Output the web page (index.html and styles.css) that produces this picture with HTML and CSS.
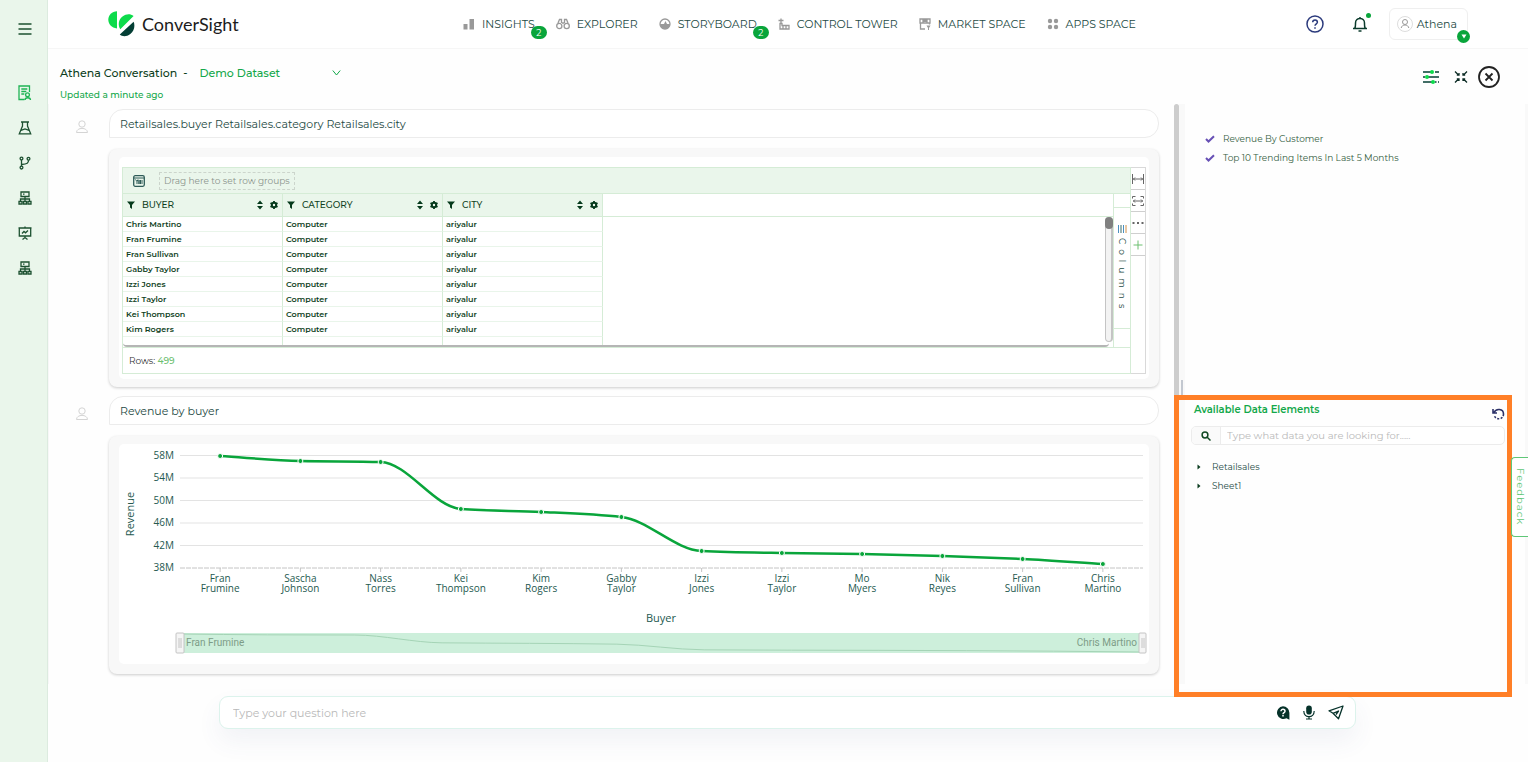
FILE: index.html
```html
<!DOCTYPE html>
<html lang="en">
<head>
  <meta charset="UTF-8" />
  <meta name="viewport" content="width=device-width, initial-scale=1.0"/>
  <title>ConverSight - Athena</title>
  <link rel="stylesheet" href="styles.css">
</head>
<body>

  <!-- Sidebar -->
  <aside class="sidebar">
    <button class="side-btn menu" aria-label="Menu"><svg width="14" height="14" viewBox="0 0 14 14"><path d="M0.5 2h13M0.5 7h13M0.5 12h13"/></svg></button>
    <a href="#" class="side-btn active" aria-label="Conversations"><svg width="14" height="16" viewBox="0 0 14 16"><path d="M6.500 14.500H1V1h10.500v6M3.300 4h6M3.300 6.500h5M3.300 9h3"/><circle cx="9.500" cy="9.800" r="1.900"/><path d="M7 15c0-3 5.500-3 5.500 0"/></svg></a>
    <a href="#" class="side-btn" aria-label="Lab"><svg width="14" height="14" viewBox="0 0 14 14"><path d="M3 1h8M4.500 1v4L1.300 12.800h11.400L9.500 5V1M3 9.300l4-1.300 4 1.300"/></svg></a>
    <a href="#" class="side-btn" aria-label="Branches"><svg width="14" height="14" viewBox="0 0 14 14"><circle cx="3.500" cy="2.500" r="1.400"/><circle cx="3.500" cy="11.600" r="1.400"/><circle cx="10.500" cy="2.800" r="1.400"/><path d="M3.500 4v6.200M10.500 4.200c0 3-1 3.800-7 4.300"/></svg></a>
    <a href="#" class="side-btn" aria-label="Flows"><svg width="14" height="14" viewBox="0 0 14 14"><path d="M3 1h8v4.500H3zM5 3.200h1.500M7 5.500v5M2.500 10V8h9v2M1 10.500h3v2.500H1zM5.500 10.500h3v2.500h-3zM10 10.500h3v2.500h-3z"/></svg></a>
    <a href="#" class="side-btn" aria-label="Presentations"><svg width="14" height="14" viewBox="0 0 14 14"><path d="M0.500 2h13M1.300 2v8h11.400V2M7 0.500V2M7 10v2.500M4.500 13.500L7 11.500l2.500 2M4 7.500l2-2 1.500 1.300L10 4.500"/></svg></a>
    <a href="#" class="side-btn" aria-label="Models"><svg width="14" height="14" viewBox="0 0 14 14"><path d="M3 1h8v4.500H3zM5 3.200h1.500M7 5.500v5M2.500 10V8h9v2M1 10.500h3v2.500H1zM5.500 10.500h3v2.500h-3zM10 10.500h3v2.500h-3z"/></svg></a>
  </aside>

  <div class="page">

    <!-- Top navigation -->
    <header class="topbar">
      <a href="#" class="logo">
        <svg width="27" height="27" viewBox="0 0 27 27">
          <path fill="#0ddb4b" d="M9 0.200V17.500C3.500 17 0.300 13 0.300 8.800 0.300 4 4 0.500 9 0.200z"/>
          <path fill="#0ddb4b" d="M25.600 5L12.300 18.300C9.800 14.500 10.300 8.500 14.500 5.500 18.500 2.500 22.500 2.800 25.600 5z"/>
          <path fill="#043f35" d="M25.600 10.800C27.300 14.500 26.300 20 22.300 23 18.500 26 14 25.600 11.800 23.500z"/>
        </svg>
        <span>ConverSight</span>
      </a>
      <nav class="nav">
        <a href="#"><svg width="12" height="12" viewBox="0 0 12 12"><path d="M0.500 6h4v5.500h-4zM6.500 1h4.500v10.500H6.500z"/></svg>INSIGHTS<span class="badge">2</span></a>
        <a href="#"><svg width="14" height="12" viewBox="0 0 14 12"><path class="ln" d="M2 5l1.500-3.500h2V5M12 5l-1.500-3.500h-2V5M6 5h2"/><circle class="ln" cx="3.300" cy="8" r="2.600"/><circle class="ln" cx="10.700" cy="8" r="2.600"/></svg>EXPLORER</a>
        <a href="#"><svg width="12" height="12" viewBox="0 0 12 12"><circle class="ln" cx="6" cy="6" r="5"/><path d="M1 6h4l1.500-3L8 6h3a5 5 0 0 1-10 0z"/></svg>STORYBOARD<span class="badge">2</span></a>
        <a href="#"><svg width="12" height="12" viewBox="0 0 12 12"><path class="ln" d="M0.500 2.500h5M3 0.500v5M2 5.500h2v2h7v3.500H2zM5 7.500V11M8 7.500V11"/></svg>CONTROL TOWER</a>
        <a href="#"><svg width="12" height="12" viewBox="0 0 12 12"><path class="ln" d="M1 1h10v4H1zM1.500 5v6H6M10.500 5v1.500M4 1v4M8 1v4"/><path d="M4 1h4v3H4zM7.500 7.500h4L10 10v2H9v-2z"/></svg>MARKET SPACE</a>
        <a href="#"><svg width="12" height="12" viewBox="0 0 12 12"><circle cx="3" cy="3" r="2.200"/><circle cx="9" cy="3" r="2.200"/><circle cx="3" cy="9" r="2.200"/><circle cx="9" cy="9" r="2.200"/></svg>APPS SPACE</a>
      </nav>
      <div class="account">
        <button class="icon-btn" aria-label="Help"><svg width="18" height="18" viewBox="0 0 18 18" fill="none" stroke="#2b3a7c" stroke-width="1.500"><circle cx="9" cy="9" r="8"/><path d="M6.700 7.200c0-3 4.700-3 4.700 0C11.400 8.800 9 8.800 9 10.800M9 12.300v1.500"/></svg></button>
        <button class="icon-btn bell" aria-label="Notifications"><svg width="16" height="18" viewBox="0 0 16 18" fill="none" stroke="#0b3b2c" stroke-width="1.500"><path d="M1 13.500h14M2.700 13.500c1-1.500.8-3 .8-5.500 0-6 9-6 9 0 0 2.500-.2 4 .8 5.500M8 3.500V2M6.500 16h3"/></svg><i></i></button>
        <button class="user">
          <svg width="16" height="16" viewBox="0 0 16 16" fill="none" stroke="#999"><circle cx="8" cy="8" r="7.500" stroke="#ddd"/><circle cx="8" cy="6" r="2.500"/><path d="M4.200 12c.6-4 7-4 7.600 0"/></svg>
          Athena
          <span class="caret"><svg width="6" height="5" viewBox="0 0 6 5"><path fill="#fff" d="M0.500 0.500h5L3 4.500z"/></svg></span>
        </button>
      </div>
    </header>

    <!-- Conversation title -->
    <section class="titlebar">
      <div>
        <div class="title-row">
          <h1>Athena Conversation</h1>
          <span>-</span>
          <button class="dataset">Demo Dataset <svg width="9" height="6" viewBox="0 0 9 6"><path fill="none" stroke="#13a84a" d="M0.800 0.500l3.700 4.500L8.200 0.500"/></svg></button>
        </div>
        <p class="updated">Updated a minute ago</p>
      </div>
      <div class="tools">
        <button class="icon-btn" aria-label="Settings"><svg width="18" height="14" viewBox="0 0 18 14"><path stroke="#043f35" stroke-width="1.500" d="M1 2h10M13 2h4M1 7h2M6 7h11M1 12h10M13 12h1.500M16 12h1"/><g fill="#0ddb4b"><circle cx="10" cy="2" r="2"/><circle cx="5" cy="7" r="2"/><circle cx="11" cy="12" r="2"/></g></svg></button>
        <button class="icon-btn" aria-label="Collapse"><svg width="14" height="14" viewBox="0 0 14 14" fill="none" stroke="#0b2b24" stroke-width="1.300"><path d="M1 1.500l3.500 3.500M2.800 5.200h2.200V3M13 1.500L9.500 5M11.200 5.200H9V3M1 12.500L4.500 9M2.800 8.800h2.200V11M13 12.500L9.500 9M11.200 8.800H9V11"/></svg></button>
        <button class="icon-btn" aria-label="Close"><svg width="24" height="24" viewBox="0 0 24 24" fill="none" stroke="#222" stroke-width="1.800"><circle cx="12" cy="12" r="10"/><path d="M8.500 8.500l7 7M15.500 8.500l-7 7"/></svg></button>
      </div>
    </section>

    <div class="workspace">

      <!-- Chat -->
      <main class="chat">
        <div class="question">
          <svg class="avatar" width="12" height="14" viewBox="0 0 12 14"><circle cx="6" cy="4" r="3.200"/><path d="M0.500 12.500c0-5.500 11-5.500 11 0z"/></svg>
          <p>Retailsales.buyer Retailsales.category Retailsales.city</p>
        </div>

        <div class="card">
          <div class="card-body table-body">
            <div class="grid">
              <div class="grid-main">
                <div class="group-bar">
                  <svg width="12" height="12" viewBox="0 0 12 12"><rect x="0.700" y="0.700" width="10.600" height="10.600" rx="1.500" fill="none" stroke="#2f5c58" stroke-width="1.300"/><path stroke="#2f5c58" fill="none" d="M1 3h10M2.500 4.500L4 6.500l1-2M4 6.500V9M6 9V5v4M7.500 9V5M9 9V5"/></svg>
                  <span>Drag here to set row groups</span>
                </div>
                <div class="grid-center">
                  <div class="grid-data">
                    <div class="grid-head-fill"></div>
                    <div class="grid-scroll">
                      <table>
                        <thead>
                          <tr>
                            <th><div><svg class="filter" width="8" height="8" viewBox="0 0 8 8"><path d="M0 0.500h8L5 4v4L3 6.500V4z"/></svg>BUYER<svg class="sort" width="6" height="10" viewBox="0 0 6 10"><path d="M0 4l3-3.500L6 4zM0 6l3 3.500L6 6z"/></svg><svg width="8" height="8" viewBox="0 0 8 8"><circle cx="4" cy="4" r="2.200" fill="none" stroke="#063a1c" stroke-width="2"/><path stroke="#063a1c" stroke-width="1.800" d="M4 0v1.500M4 6.500V8M0.500 2l1.300.8M6.200 5.200l1.300.8M0.500 6l1.300-.8M6.200 2.800L7.500 2"/></svg></div></th>
                            <th><div><svg class="filter" width="8" height="8" viewBox="0 0 8 8"><path d="M0 0.500h8L5 4v4L3 6.500V4z"/></svg>CATEGORY<svg class="sort" width="6" height="10" viewBox="0 0 6 10"><path d="M0 4l3-3.500L6 4zM0 6l3 3.500L6 6z"/></svg><svg width="8" height="8" viewBox="0 0 8 8"><circle cx="4" cy="4" r="2.200" fill="none" stroke="#063a1c" stroke-width="2"/><path stroke="#063a1c" stroke-width="1.800" d="M4 0v1.500M4 6.500V8M0.500 2l1.300.8M6.200 5.200l1.300.8M0.500 6l1.300-.8M6.200 2.800L7.500 2"/></svg></div></th>
                            <th><div><svg class="filter" width="8" height="8" viewBox="0 0 8 8"><path d="M0 0.500h8L5 4v4L3 6.500V4z"/></svg>CITY<svg class="sort" width="6" height="10" viewBox="0 0 6 10"><path d="M0 4l3-3.500L6 4zM0 6l3 3.500L6 6z"/></svg><svg width="8" height="8" viewBox="0 0 8 8"><circle cx="4" cy="4" r="2.200" fill="none" stroke="#063a1c" stroke-width="2"/><path stroke="#063a1c" stroke-width="1.800" d="M4 0v1.500M4 6.500V8M0.500 2l1.300.8M6.200 5.200l1.300.8M0.500 6l1.300-.8M6.200 2.800L7.500 2"/></svg></div></th>
                          </tr>
                        </thead>
                        <tbody>
                          <tr><td>Chris Martino</td><td>Computer</td><td>ariyalur</td></tr>
                          <tr><td>Fran Frumine</td><td>Computer</td><td>ariyalur</td></tr>
                          <tr><td>Fran Sullivan</td><td>Computer</td><td>ariyalur</td></tr>
                          <tr><td>Gabby Taylor</td><td>Computer</td><td>ariyalur</td></tr>
                          <tr><td>Izzi Jones</td><td>Computer</td><td>ariyalur</td></tr>
                          <tr><td>Izzi Taylor</td><td>Computer</td><td>ariyalur</td></tr>
                          <tr><td>Kei Thompson</td><td>Computer</td><td>ariyalur</td></tr>
                          <tr><td>Kim Rogers</td><td>Computer</td><td>ariyalur</td></tr>
                          <tr class="spacer"><td></td><td></td><td></td></tr>
                        </tbody>
                      </table>
                    </div>
                    <div class="scrollbar"><i></i></div>
                  </div>
                  <div class="columns-tab">
                    <button><svg width="9" height="8" viewBox="0 0 9 8"><path stroke="#4a90c0" d="M0.500 0v8M5.500 0v8"/><path stroke="#3c6c68" d="M3 0v8"/><path stroke="#d0904a" d="M8 0v8"/></svg><span>Columns</span></button>
                  </div>
                </div>
                <div class="grid-foot">Rows: <b>499</b></div>
              </div>
              <div class="grid-tools">
                <button aria-label="Fit width"><svg width="12" height="10" viewBox="0 0 12 10"><path d="M0.500 0v10M11.500 0v10M1 5h10M3 3.500L1.500 5 3 6.500M9 3.500L10.500 5 9 6.500"/></svg></button>
                <button aria-label="Auto size"><svg width="12" height="10" viewBox="0 0 12 10"><path d="M3.500 0.500h-3v2M8.500 0.500h3v2M3.500 9.500h-3v-2M8.500 9.500h3v-2M1 5h10M3 3.500L1.500 5 3 6.500M9 3.500L10.500 5 9 6.500"/></svg></button>
                <button aria-label="More"><svg width="12" height="2" viewBox="0 0 12 2"><path class="more" d="M0.500 1h2M5 1h2M9.500 1h2"/></svg></button>
                <button aria-label="Add"><svg width="10" height="10" viewBox="0 0 10 10"><path class="add" d="M5 0.500v9M0.500 5h9"/></svg></button>
              </div>
            </div>
          </div>
        </div>

        <div class="question">
          <svg class="avatar" width="12" height="14" viewBox="0 0 12 14"><circle cx="6" cy="4" r="3.200"/><path d="M0.500 12.500c0-5.500 11-5.500 11 0z"/></svg>
          <p>Revenue by buyer</p>
        </div>

        <div class="card chart-card">
          <div class="card-body">
            <svg class="chart" id="chart" viewBox="0 0 1030 220" role="img" aria-label="Revenue by buyer">
              <g id="axis"></g>
              <path id="line" class="line"/>
              <g id="dots"></g>
              <text class="axis-name" transform="translate(15 70) rotate(-90)">Revenue</text>
              <text class="axis-name" x="542" y="178">Buyer</text>
              <rect x="61" y="189" width="961" height="20" fill="#cdefdb"/>
              <path id="preview" class="preview"/>
              <rect class="handle" x="57" y="189" width="8" height="20" rx="1"/>
              <path class="grip" d="M60 194v10M62 194v10"/>
              <rect class="handle" x="1020" y="189" width="7" height="20" rx="1"/>
              <path class="grip" d="M1023 194v10M1025 194v10"/>
              <text class="range" x="67" y="202">Fran Frumine</text>
              <text class="range" x="1018" y="202" text-anchor="end">Chris Martino</text>
            </svg>
          </div>
        </div>
      </main>

      <!-- Right panel -->
      <aside class="panel">
        <div class="splitter"></div>
        <div class="panel-body">
          <ul class="trending">
            <li><svg width="10" height="8" viewBox="0 0 10 8"><path d="M1 4l2.500 2.500L9 1.200"/></svg><a href="#">Revenue By Customer</a></li>
            <li><svg width="10" height="8" viewBox="0 0 10 8"><path d="M1 4l2.500 2.500L9 1.200"/></svg><a href="#">Top 10 Trending Items In Last 5 Months</a></li>
          </ul>
          <section class="elements">
            <div class="elements-head">
              <h2>Available Data Elements</h2>
              <button class="icon-btn" aria-label="Refresh"><svg width="13" height="12" viewBox="0 0 13 12" fill="none" stroke="#2b3168" stroke-width="1.600"><path d="M2 4.500C4 0 11.500 0.500 11.500 6M1 1v4h4"/><path stroke-dasharray="2 1.500" d="M11.500 6c0 6-7.500 6-9 2"/></svg></button>
            </div>
            <label class="search">
              <span><svg width="10" height="10" viewBox="0 0 10 10" fill="none" stroke="#124a24" stroke-width="1.500"><circle cx="4" cy="4" r="2.900"/><path d="M6 6l3.500 3.500"/></svg></span>
              <input type="text" placeholder="Type what data you are looking for....." aria-label="Search data elements">
            </label>
            <ul class="tree">
              <li><button><svg width="4" height="6" viewBox="0 0 4 6"><path d="M0.500 0.500L3.500 3l-3 2.500z"/></svg>Retailsales</button></li>
              <li><button><svg width="4" height="6" viewBox="0 0 4 6"><path d="M0.500 0.500L3.500 3l-3 2.500z"/></svg>Sheet1</button></li>
            </ul>
            <div class="highlight"></div>
          </section>
        </div>
      </aside>
    </div>

    <!-- Ask box -->
    <form class="ask">
      <input type="text" placeholder="Type your question here" aria-label="Question">
      <button type="button" class="icon-btn" aria-label="Suggestions"><svg width="14" height="14" viewBox="0 0 14 14"><path fill="#06322a" d="M7 0.300a6.400 6.400 0 0 1 6.400 6.400v7L10.500 12.300A6.400 6.400 0 1 1 7 0.300z"/><path fill="none" stroke="#fff" stroke-width="1.500" d="M5 5.200c0-2.700 4-2.500 4 0C9 6.700 7 6.600 7 8.200M7 9v1.600"/></svg></button>
      <button type="button" class="icon-btn" aria-label="Speak"><svg width="12" height="15" viewBox="0 0 12 15"><rect x="3.200" y="0.500" width="5.600" height="9" rx="2.800" fill="#06322a"/><path fill="none" stroke="#06322a" stroke-width="1.200" d="M0.800 6c0 7.500 10.400 7.500 10.400 0M6 11.500V14M3 14h6"/></svg></button>
      <button type="submit" class="icon-btn" aria-label="Send"><svg width="16" height="15" viewBox="0 0 16 15" fill="none" stroke="#06322a" stroke-width="1.300" stroke-linejoin="round"><path d="M15 1L1 5.800 5 8.300 10.500 13.800zM5 8.300L10.500 6 8 9.500"/></svg></button>
    </form>
  </div>

  <button class="feedback">Feedback</button>

  <script src="chart.js"></script>
</body>
</html>
```

FILE: styles.css
```css
* { box-sizing: border-box; }
body { margin: 0; min-height: 100vh; display: flex; position: relative; overflow-x: hidden; font-family: Montserrat, Inter, sans-serif; font-size: 11px; line-height: 16px; color: #1d4a44; background: #fefefe; }
h1, h2, p, ul { margin: 0; padding: 0; }
ul { list-style: none; }
a { color: inherit; text-decoration: none; }
button { font: inherit; color: inherit; background: none; border: 0; padding: 0; cursor: pointer; }
svg { display: block; flex: none; }
.icon-btn { display: flex; }

/* sidebar */
.sidebar { width: 48px; flex: none; background: #eaf6eb; border-right: 1px solid #dcebdf; padding: 18px 0 0 3px; display: flex; flex-direction: column; align-items: center; }
.side-btn { height: 35px; display: flex; align-items: center; justify-content: center; }
.side-btn svg { fill: none; stroke: #1d5131; stroke-width: 1.3; }
.side-btn.menu { height: 21px; margin-bottom: 36px; }
.side-btn.active svg { stroke: #1fb455; }

.page { flex: 1; min-width: 0; display: flex; flex-direction: column; }

/* top bar */
.topbar { height: 49px; flex: none; display: flex; align-items: center; padding: 0 60px; background: #fff; border-bottom: 1px solid #f6f6f6; }
.logo { display: flex; align-items: center; gap: 7px; width: 355px; font-family: Lato, sans-serif; font-size: 18px; color: #1c1c1c; }
.nav { display: flex; gap: 21px; font-size: 11px; }
.nav a { position: relative; display: flex; align-items: center; gap: 7px; white-space: nowrap; }
.nav svg { fill: #999; }
.nav .ln { fill: none; stroke: #999; stroke-width: 1.3; }
.badge { position: absolute; right: -12px; bottom: -7px; width: 16px; height: 13px; border-radius: 7px; background: #09a53b; color: #fff; font-size: 9px; line-height: 13px; text-align: center; }
.account { margin-left: auto; display: flex; align-items: center; gap: 28px; }
.bell { position: relative; }
.bell i { position: absolute; top: -2px; right: -3px; width: 5px; height: 5px; border-radius: 50%; background: #09a53b; }
.user { position: relative; display: flex; align-items: center; gap: 4px; height: 32px; padding: 0 10px 0 7px; margin-left: -7px; border: 1px solid #efefef; border-radius: 6px; }
.caret { position: absolute; right: -3px; bottom: -4px; width: 13px; height: 13px; border-radius: 50%; background: #09a53b; display: flex; align-items: center; justify-content: center; }

/* title */
.titlebar { height: 55px; flex: none; display: flex; justify-content: space-between; padding: 16px 27px 0 12px; font-weight: 500; }
.title-row { display: flex; align-items: center; gap: 6px; color: #0c3d20; }
h1 { font-size: 11px; font-weight: 500; }
.dataset { display: flex; align-items: center; justify-content: space-between; width: 142px; margin-left: 6px; color: #13a84a; }
.updated { margin-top: 7px; font-size: 9px; line-height: 14px; color: #13a84a; }
.tools { display: flex; align-items: center; gap: 14px; height: 24px; }
.tools .icon-btn + .icon-btn + .icon-btn { margin-left: -5px; }

/* chat */
.workspace { display: flex; flex: none; }
.chat { flex: 1; min-width: 0; padding: 5px 15px 10px 60px; border-left: 1px solid #f7f7f7; }
.question { position: relative; margin-bottom: 11px; }
.question p { height: 29px; padding: 0 10px; line-height: 28px; border: 1px solid #ececec; border-radius: 14px 14px 14px 0; background: #fff; }
.avatar { position: absolute; left: -33px; top: 11px; fill: none; stroke: #d4d4d4; }
.card { padding: 8px 10px; margin-bottom: 9px; border-radius: 8px; background: #f8f8f8; box-shadow: 0 1px 3px rgba(0, 0, 0, 0.2); }
.card-body { background: #fff; border-radius: 5px; }
.table-body { padding: 10px 3px 5px; }

.grid { display: flex; height: 207px; font-size: 9px; }
.grid-main { flex: 1; min-width: 0; display: flex; flex-direction: column; border: 1px solid #d5ecd6; }
.group-bar { height: 26px; flex: none; display: flex; align-items: center; gap: 14px; padding-left: 10px; background: #eaf6eb; border-bottom: 1px solid #d5ecd6; }
.group-bar span { padding: 0 4px; border: 1px dashed #ccd5cc; font-size: 9px; color: #8b938c; }
.grid-center { flex: 1; min-height: 0; display: flex; }
.grid-data { flex: 1; position: relative; border-right: 1px solid #d5ecd6; }
.grid-head-fill { height: 23px; border-bottom: 1px solid #d5ecd6; }
.grid-scroll { position: relative; margin-top: -23px; margin-right: 4px; height: 153px; overflow: hidden; border-bottom: 2px solid #b5b5b5; border-radius: 0 0 4px 4px; }
table { width: 480px; table-layout: fixed; border-collapse: separate; border-spacing: 0; color: #0f3f22; }
th { height: 23px; padding: 0 4px; line-height: 14px; background: #eaf6eb; border-right: 1px solid #d5ecd6; border-bottom: 1px solid #d5ecd6; font-weight: 500; }
th div { display: flex; align-items: center; gap: 7px; }
th svg { fill: #063a1c; }
.sort { margin-left: auto; }
td { height: 15px; padding: 1px 3px 0; line-height: 13px; font-size: 8px; font-weight: 600; border-right: 1px solid #d5ecd6; border-bottom: 1px solid #e9f5ea; }
.spacer td { height: 8px; border-bottom: 0; }
.scrollbar { position: absolute; right: 0; top: 23px; bottom: 5px; width: 8px; border: 1px solid #c4c4c4; border-width: 0 2px 1px 1px; border-radius: 4px; background: #f3f3f3; }
.scrollbar i { display: block; width: 8px; height: 12px; margin-left: -1px; border-radius: 4px; background: #808080; }
.columns-tab { width: 16px; flex: none; padding-top: 13px; }
.columns-tab button { width: 16px; height: 122px; display: flex; flex-direction: column; align-items: center; gap: 5px; padding-top: 17px; border: 1px solid #d5ecd6; border-width: 1px 0; }
.columns-tab span { writing-mode: vertical-rl; line-height: 14px; letter-spacing: 5px; }
.grid-foot { height: 26px; flex: none; padding-left: 6px; line-height: 25px; border-top: 1px solid #d5ecd6; color: #333; }
.grid-foot b { font-weight: 500; color: #6cc070; }
.grid-tools { width: 15px; flex: none; border: 1px solid #d9d9d9; border-left: 0; }
.grid-tools button { width: 100%; height: 22px; display: flex; align-items: center; justify-content: center; border-bottom: 1px solid #cfcfcf; }
.grid-tools path { fill: none; stroke: #666; }
.grid-tools .more { stroke-width: 2; }
.grid-tools .add { stroke: #6cc070; }

/* chart */
.chart-card { padding-bottom: 10px; margin-bottom: 0; }
.chart { width: 100%; height: auto; font-family: "Open Sans", "Noto Sans", sans-serif; font-size: 10px; fill: #25594f; }
.chart .line { fill: none; stroke: #09a53b; stroke-width: 2.5; }
.chart .preview { fill: none; stroke: #a5d4b6; }
.chart .dot { fill: #09a53b; stroke: #fff; }
.chart .rule { stroke: #e3e3e3; }
.chart .base { stroke: #c4c4c4; stroke-dasharray: 5 1; }
.chart .axis-name { font-size: 11px; text-anchor: middle; }
.chart .range { font-family: Roboto, "Liberation Sans", sans-serif; fill: #7d9c87; }
.chart .handle { fill: #f5f5f5; stroke: #c4c4c4; }
.chart .grip { fill: none; stroke: #c4c4c4; }

/* right panel */
.panel { width: 354px; flex: none; display: flex; border-right: 3px solid #f9f9f9; }
.splitter { width: 5px; flex: none; background: #cdcdcd; border-radius: 3px 3px 0 0; }
.panel-body { flex: 1; min-width: 0; display: flex; flex-direction: column; border-left: 6px solid #f9f9f9; }
.trending { position: relative; height: 292px; padding: 25px 0 0 20px; font-size: 9px; color: #35603f; }
.trending::after { content: ""; position: absolute; left: -4px; bottom: 0; width: 2px; height: 16px; background: #c3c8d0; }
.trending li { display: flex; align-items: center; gap: 8px; height: 19px; }
.trending svg { fill: none; stroke: #6750b5; stroke-width: 2; }
.elements { flex: 1; position: relative; padding: 6px 20px 0 6px; }
.elements-head { display: flex; justify-content: space-between; padding-left: 3px; color: #13a84a; }
.elements-head .icon-btn { padding-top: 6px; }
h2 { font-size: 10px; line-height: 16px; font-weight: 600; }
.search { display: flex; height: 19px; margin-top: 6px; border: 1px solid #ececec; border-radius: 5px; background: #fff; overflow: hidden; font-size: 10px; }
.search span { width: 29px; flex: none; display: flex; align-items: center; justify-content: center; background: #fafafa; border-right: 1px solid #ececec; }
input { flex: 1; min-width: 0; border: 0; outline: 0; background: none; font: inherit; color: #1d4a44; }
input::placeholder { color: #b9b9b9; opacity: 1; }
.search input { padding: 0 6px; }
.tree { padding: 12px 0 0 6px; font-size: 9px; }
.tree button { display: flex; align-items: center; gap: 11px; height: 19px; }
.tree svg { fill: #0c3d20; }
.highlight { position: absolute; top: -1px; left: -11px; right: 13px; bottom: -13px; border: 5px solid #ff7f27; pointer-events: none; }

/* ask box */
.ask { display: flex; align-items: center; gap: 13px; height: 33px; margin: 12px 172px 33px 171px; padding: 0 11px; border: 1px solid #dcf3ec; border-radius: 9px; background: #fff; box-shadow: 0 12px 24px rgba(70, 80, 140, 0.07); }

.feedback { position: absolute; right: 0; top: 457px; width: 17px; height: 80px; border: 1px solid #5fc777; border-right: 0; border-radius: 4px 0 0 4px; background: #fff; color: #5fc777; font-size: 10px; letter-spacing: 1px; writing-mode: vertical-rl; line-height: 15px; }
```

FILE: chart.js
```js
const points = [
  ["Fran", "Frumine", 12], ["Sascha", "Johnson", 17], ["Nass", "Torres", 18],
  ["Kei", "Thompson", 65], ["Kim", "Rogers", 68], ["Gabby", "Taylor", 73],
  ["Izzi", "Jones", 107], ["Izzi", "Taylor", 109], ["Mo", "Myers", 110],
  ["Nik", "Reyes", 112], ["Fran", "Sullivan", 115], ["Chris", "Martino", 120]
];
const left = 61;
const right = 1024;
const step = (right - left) / points.length;
const xAt = i => left + step * (i + 0.5);

// horizontal rules and revenue labels
let axis = "";
["58M", "54M", "50M", "46M", "42M", "38M"].forEach((label, i) => {
  const y = 11.5 + i * 22.5;
  const cls = i === 5 ? "base" : "rule";
  axis += `<path class="${cls}" d="M${left} ${y}H${right}"/><text x="55" y="${y + 3}" text-anchor="end">${label}</text>`;
});

let dots = "";
points.forEach(([first, last, y], i) => {
  const x = xAt(i);
  axis += `<path class="base" d="M${x} 124v4"/>`;
  axis += `<text text-anchor="middle"><tspan x="${x}" y="138">${first}</tspan><tspan x="${x}" y="148">${last}</tspan></text>`;
  dots += `<circle class="dot" cx="${x}" cy="${y}" r="2.5"/>`;
});

// monotone cubic through evenly spaced points
function curve(xs, ys) {
  const gap = xs[1] - xs[0];
  const slope = ys.slice(1).map((y, i) => (y - ys[i]) / gap);
  const m = ys.map((y, i) => {
    if (i === 0) return slope[0];
    if (i === slope.length) return slope[i - 1];
    const a = slope[i - 1], b = slope[i];
    return a * b <= 0 ? 0 : 2 * a * b / (a + b);
  });
  const t = gap / 3;
  let d = `M${xs[0]} ${ys[0]}`;
  for (let i = 1; i < xs.length; i++) {
    d += `C${xs[i - 1] + t} ${ys[i - 1] + m[i - 1] * t} ${xs[i] - t} ${ys[i] - m[i] * t} ${xs[i]} ${ys[i]}`;
  }
  return d;
}

document.getElementById("axis").innerHTML = axis;
document.getElementById("dots").innerHTML = dots;
document.getElementById("line").setAttribute("d", curve(points.map((p, i) => xAt(i)), points.map(p => p[2])));
document.getElementById("preview").setAttribute("d", curve(
  points.map((p, i) => left + i * 961 / 11),
  points.map(p => 190 + (p[2] - 12) / 108 * 18)
));
```
